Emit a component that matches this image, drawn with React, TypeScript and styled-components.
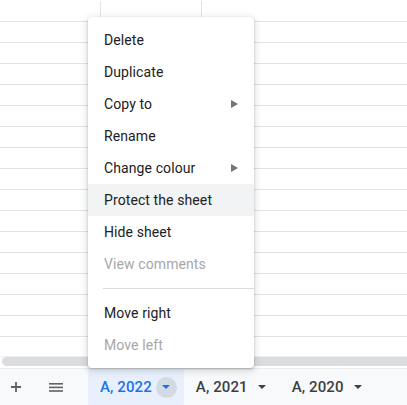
import React from "react";
import styled, { createGlobalStyle } from "styled-components";

const Global = createGlobalStyle`
  html, body { margin: 0; padding: 0; background: #fff; overflow: hidden; }
  body { font-family: Roboto, "Liberation Sans", Arial, sans-serif; }
  #root { width: 407px; height: 405px; }
`;

const Page = styled.div`
  position: relative;
  width: 407px;
  height: 405px;
  display: flex;
  flex-direction: column;
  overflow: hidden;
  background: #fff;
`;

const Grid = styled.div`
  height: 356px;
  padding-top: 1px;
  box-sizing: border-box;
  overflow: hidden;
  display: flex;
  flex-direction: column;
  flex: none;
`;

const Row = styled.div`
  display: flex;
  height: 20px;
  border-bottom: 1px solid #e2e3e3;
  flex: none;
`;

const Cell = styled.div<{ $w?: number }>`
  width: ${(p) => (p.$w ? `${p.$w}px` : "auto")};
  flex: ${(p) => (p.$w ? "none" : "1")};
  border-right: ${(p) => (p.$w ? "1px solid #e2e3e3" : "none")};
`;

const ScrollTrack = styled.div`
  height: 12px;
  flex: none;
  border-top: 1px solid #eceeef;
  box-sizing: border-box;
  padding: 0 0 2px 2px;
  display: flex;
`;

const Thumb = styled.div`
  flex: 1;
  margin-right: -10px;
  background: #dadce0;
  border-radius: 5px;
`;

const Bar = styled.div`
  flex: 1;
  display: flex;
  align-items: stretch;
  background: #f8f9fa;
  border-top: 1px solid #ebedef;
`;

const IconBtn = styled.div<{ $ml?: number }>`
  width: 32px;
  margin-left: ${(p) => p.$ml ?? 0}px;
  display: flex;
  align-items: center;
  justify-content: center;
  color: #5f6368;
`;

const Tabs = styled.div`
  display: flex;
  margin-left: 16px;
`;

const Tab = styled.div<{ $active?: boolean }>`
  display: flex;
  align-items: center;
  gap: 4px;
  padding: 0 7px 0 12px;
  background: ${(p) => (p.$active ? "#e8f0fe" : "transparent")};
  color: ${(p) => (p.$active ? "#1a73e8" : "#3c4043")};
  font-size: 15px;
  font-weight: 500;
  letter-spacing: 0.1px;
`;

const Caret = styled.div<{ $active?: boolean }>`
  width: 21px;
  height: 21px;
  border-radius: 50%;
  background: ${(p) => (p.$active ? "#d3dae4" : "transparent")};
  display: flex;
  align-items: center;
  justify-content: center;
`;

const Menu = styled.div`
  position: absolute;
  left: 88px;
  top: 17px;
  width: 166px;
  padding: 7px 0;
  background: #fff;
  border-radius: 4px;
  box-shadow: 0 2px 6px 2px rgba(60, 64, 67, 0.15), 0 1px 2px rgba(60, 64, 67, 0.3);
  z-index: 2;
`;

const Item = styled.div<{ $hover?: boolean; $disabled?: boolean }>`
  height: 32px;
  display: flex;
  align-items: center;
  justify-content: space-between;
  padding: 0 16px 0 16px;
  font-size: 14px;
  letter-spacing: 0.1px;
  color: ${(p) => (p.$disabled ? "#a6a7a8" : "#202124")};
  background: ${(p) => (p.$hover ? "#f1f3f4" : "transparent")};
`;

const Sep = styled.div`
  height: 1px;
  background: #dadce0;
  margin: 8px 0 8px 15px;
`;

const SubArrow = () => (
  <svg width="7" height="8" viewBox="0 0 7 8">
    <path d="M0 0 L7 4 L0 8 Z" fill="#757575" />
  </svg>
);

const Down = ({ color }: { color: string }) => (
  <svg width="8" height="4" viewBox="0 0 8 4">
    <path d="M0 0 H8 L4 4 Z" fill={color} />
  </svg>
);

const items: { label: string; sub?: boolean; hover?: boolean; disabled?: boolean; sep?: boolean }[] = [
  { label: "Delete" },
  { label: "Duplicate" },
  { label: "Copy to", sub: true },
  { label: "Rename" },
  { label: "Change colour", sub: true },
  { label: "Protect the sheet", hover: true },
  { label: "Hide sheet" },
  { label: "View comments", disabled: true, sep: true },
  { label: "Move right" },
  { label: "Move left", disabled: true },
];

const tabs = [
  { label: "A, 2022", active: true },
  { label: "A, 2021" },
  { label: "A, 2020" },
];

export default function App() {
  return (
    <Page>
      <Global />
      <Grid>
        {Array.from({ length: 18 }).map((_, i) => (
          <Row key={i}>
            <Cell $w={100} />
            <Cell $w={100} />
            <Cell />
          </Row>
        ))}
      </Grid>
      <ScrollTrack>
        <Thumb />
      </ScrollTrack>
      <Bar>
        <IconBtn>
          <svg width="10" height="10" viewBox="0 0 10 10">
            <path d="M5 0 V10 M0 5 H10" stroke="#5f6368" strokeWidth="1.8" />
          </svg>
        </IconBtn>
        <IconBtn $ml={8}>
          <svg width="14" height="9" viewBox="0 0 14 9">
            <rect x="0" y="0" width="14" height="1.6" fill="#5f6368" />
            <rect x="0" y="3.6" width="14" height="1.6" fill="#5f6368" />
            <rect x="0" y="7.2" width="14" height="1.6" fill="#5f6368" />
          </svg>
        </IconBtn>
        <Tabs>
          {tabs.map((t) => (
            <Tab key={t.label} $active={t.active}>
              {t.label}
              <Caret $active={t.active}>
                <Down color={t.active ? "#1a73e8" : "#3c4043"} />
              </Caret>
            </Tab>
          ))}
        </Tabs>
      </Bar>
      <Menu>
        {items.map((it) => (
          <React.Fragment key={it.label}>
            <Item $hover={it.hover} $disabled={it.disabled}>
              <span>{it.label}</span>
              {it.sub && <SubArrow />}
            </Item>
            {it.sep && <Sep />}
          </React.Fragment>
        ))}
      </Menu>
    </Page>
  );
}
